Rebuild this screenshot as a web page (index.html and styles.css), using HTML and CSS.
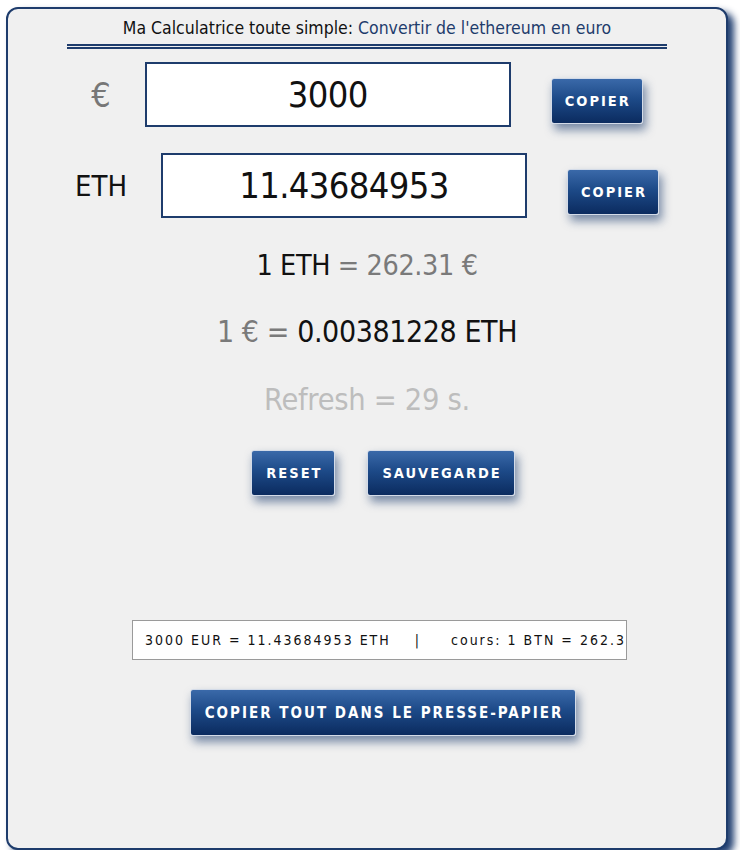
FILE: index.html
```html
<!DOCTYPE html>
<html lang="fr">
<head>
<meta charset="utf-8">
<title>Convertir de l'ethereum en euro</title>
<link rel="stylesheet" href="styles.css">
</head>
<body>
<div class="card">
  <h1 class="title">Ma Calculatrice toute simple: <span class="title-accent">Convertir de l'ethereum en euro</span></h1>
  <div class="rule"></div>

  <div class="conv-row">
    <span class="cur-label cur-eur">€</span>
    <div class="amount">3000</div>
    <button class="btn btn-copy">COPIER</button>
  </div>
  <div class="conv-row conv-row-2">
    <span class="cur-label">ETH</span>
    <div class="amount">11.43684953</div>
    <button class="btn btn-copy">COPIER</button>
  </div>

  <p class="rate rate-1"><span class="dark">1 ETH</span> <span class="grey">= 262.31 €</span></p>
  <p class="rate rate-2"><span class="grey">1 € =</span> <span class="dark">0.00381228 ETH</span></p>
  <p class="refresh">Refresh = 29 s.</p>

  <div class="actions">
    <button class="btn btn-action">RESET</button>
    <button class="btn btn-action">SAUVEGARDE</button>
  </div>

  <div class="summary">3000 EUR = 11.43684953 ETH    |     cours: 1 BTN = 262.31 €</div>

  <button class="btn btn-all">COPIER TOUT DANS LE PRESSE-PAPIER</button>
</div>
</body>
</html>
```

FILE: styles.css
```css
html, body {
  margin: 0;
  padding: 0;
  background: #ffffff;
}

body {
  font-family: "DejaVu Sans Condensed", "Liberation Sans Narrow", "Roboto Condensed", "Liberation Sans", sans-serif;
  color: #111;
  padding: 7px 0 0 6px;
}

.card {
  box-sizing: border-box;
  width: 722px;
  height: 843px;
  background: #f0f0f0;
  border: 2px solid #1e3c6c;
  border-radius: 12px;
  box-shadow: 6px 5px 7px rgba(22, 54, 105, 0.95);
  display: flex;
  flex-direction: column;
  align-items: center;
}

.title {
  margin: 8px 0 0;
  font-size: 17.5px;
  line-height: 23px;
  font-weight: normal;
  color: #111;
}

.title-accent {
  color: #1e3c6c;
}

.rule {
  width: 600px;
  height: 1px;
  margin-top: 4px;
  border-top: 2px solid #1e3c6c;
  border-bottom: 2px solid #1e3c6c;
}

.conv-row {
  display: flex;
  align-items: center;
  margin-top: 13px;
}

.conv-row-2 {
  margin-top: 26px;
}

.cur-label {
  font-size: 29px;
  margin-right: 34px;
  color: #111;
}

.cur-eur {
  color: #777;
  font-size: 34px;
}

.amount {
  box-sizing: border-box;
  width: 366px;
  height: 65px;
  background: #fff;
  border: 2px solid #1e3c6c;
  display: flex;
  align-items: center;
  justify-content: center;
  font-size: 36px;
  letter-spacing: -0.6px;
  color: #111;
}

.btn {
  box-sizing: border-box;
  height: 46px;
  padding: 0 12px 0 14px;
  border: 1px solid #d3dbe8;
  border-radius: 3px;
  background: linear-gradient(to bottom, #3a69a9 0%, #1d4a88 45%, #0b2b5f 100%);
  color: #fff;
  font-family: inherit;
  font-weight: bold;
  font-size: 14.5px;
  letter-spacing: 2px;
  box-shadow: 3px 6px 10px rgba(22, 54, 105, 0.55);
  cursor: pointer;
}

.btn-copy {
  width: 92px;
  padding: 0 0 0 2px;
  margin-left: 40px;
  margin-top: 13px;
}

.rate {
  margin: 28px 0 0;
  font-size: 30px;
  line-height: 40px;
  letter-spacing: -0.4px;
}

.rate-1 {
  font-size: 28.5px;
}

.rate-2 {
  margin-top: 26px;
}

.dark {
  color: #111;
}

.grey {
  color: #7a7a7a;
}

.refresh {
  margin: 28px 0 0;
  font-size: 30.5px;
  line-height: 40px;
  letter-spacing: -0.3px;
  color: #bdbdbd;
}

.actions {
  display: flex;
  margin-top: 30px;
}

.btn-action {
  margin-left: 32px;
}

.summary {
  box-sizing: border-box;
  width: 495px;
  height: 40px;
  margin: 124px 0 0 25px;
  padding-left: 12px;
  background: #fff;
  border: 1px solid #9a9a9a;
  display: flex;
  align-items: center;
  font-size: 14px;
  letter-spacing: 2px;
  white-space: pre;
  overflow: hidden;
  color: #111;
}

.btn-all {
  height: 47px;
  margin: 29px 0 0 32px;
  font-size: 15px;
}
```
